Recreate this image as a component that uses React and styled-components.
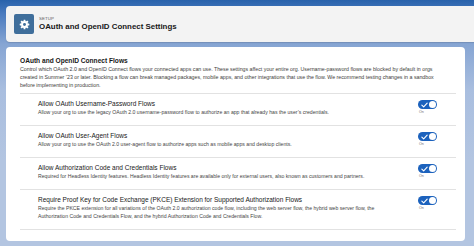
import React from "react"
import styled, { createGlobalStyle } from "styled-components"

const GlobalStyle = createGlobalStyle`
  html, body {
    margin: 0;
    padding: 0;
  }
  body {
    width: 474px;
    height: 246px;
    overflow: hidden;
    font-family: "Liberation Sans", Arial, sans-serif;
    color: #181818;
    background: linear-gradient(
      180deg,
      #2862ab 0px,
      #4a7bbf 14px,
      #86a5d3 44px,
      #a9bedf 90px,
      #b3c5e1 160px
    );
  }
`

const Page = styled.div`
  display: flex;
  flex-direction: column;
  gap: 5px;
  padding: 6px 0 0 6px;
`

const PageHeader = styled.div`
  display: flex;
  align-items: center;
  gap: 4px;
  height: 36px;
  box-sizing: border-box;
  padding: 0 0 0 8px;
  margin-right: -4px;
  background: #f3f3f3;
  border-radius: 4px 0 0 4px;
  box-shadow: 0 1px 1px rgba(0, 0, 0, 0.12);
`

const SetupIcon = styled.div`
  display: flex;
  align-items: center;
  justify-content: center;
  width: 20px;
  height: 20px;
  border-radius: 2px;
  background: #3f6e9b;
`

const HeaderText = styled.div`
  display: flex;
  flex-direction: column;
  padding-left: 1px;
`

const Eyebrow = styled.div`
  font-size: 4.4px;
  line-height: 6px;
  color: #5c5c5c;
  text-transform: uppercase;
  letter-spacing: 0.1px;
`

const PageTitle = styled.h1`
  margin: 0;
  font-size: 7.9px;
  line-height: 10px;
  font-weight: 700;
  color: #181818;
`

const Card = styled.div`
  width: 459px;
  box-sizing: border-box;
  padding: 10px 9px 11px 14px;
  background: #ffffff;
  border-radius: 4px;
`

const SectionTitle = styled.h2`
  margin: 0;
  font-size: 6.6px;
  line-height: 8px;
  font-weight: 700;
  color: #181818;
`

const SectionText = styled.p`
  margin: 0 0 4px;
  font-size: 5.25px;
  line-height: 8px;
  color: #3e3e3c;
  white-space: nowrap;
`

const Setting = styled.div`
  display: flex;
  align-items: flex-start;
  justify-content: space-between;
  padding: 6px 19px 9px 18px;
  border-top: 1px solid #e2e2e2;

  &:last-child {
    border-bottom: 1px solid #e2e2e2;
  }
`

const SettingText = styled.div`
  display: flex;
  flex-direction: column;
`

const SettingTitle = styled.div`
  font-size: 6.5px;
  line-height: 8px;
  color: #181818;
`

const SettingHelp = styled.div`
  font-size: 5.15px;
  line-height: 8px;
  color: #444444;
  white-space: nowrap;
`

const ToggleWrap = styled.div`
  display: flex;
  flex-direction: column;
  align-items: flex-start;
  padding-top: 0px;
`

const Toggle = styled.div`
  position: relative;
  display: flex;
  align-items: center;
  width: 19px;
  height: 9px;
  border-radius: 5px;
  background: ${(p) => (p.$on ? "#1c62bd" : "#c9c9c9")};
`

const Knob = styled.span`
  position: absolute;
  top: 1px;
  right: 1px;
  width: 7px;
  height: 7px;
  border-radius: 50%;
  background: #ffffff;
`

const ToggleLabel = styled.span`
  margin-top: 1px;
  padding-left: 1px;
  font-size: 3.6px;
  line-height: 5px;
  color: #706e6b;
`

const Gear = () => {
  const teeth = [0, 45, 90, 135, 180, 225, 270, 315]
  return (
    <svg width="11" height="11" viewBox="0 0 24 24">
      {teeth.map((a) => (
        <rect
          key={a}
          x="10"
          y="1.5"
          width="4"
          height="5"
          rx="0.8"
          fill="#fff"
          transform={`rotate(${a} 12 12)`}
        />
      ))}
      <circle cx="12" cy="12" r="7.4" fill="#fff" />
      <circle cx="12" cy="12" r="3.2" fill="#3f6e9b" />
    </svg>
  )
}

const Switch = ({ on = true }) => (
  <ToggleWrap>
    <Toggle $on={on}>
      <svg width="7" height="6" viewBox="0 0 10 8" style={{ marginLeft: 3 }}>
        <path
          d="M1.2 4.2 L3.8 6.6 L8.8 1.4"
          fill="none"
          stroke="#fff"
          strokeWidth="1.6"
          strokeLinecap="round"
          strokeLinejoin="round"
        />
      </svg>
      <Knob />
    </Toggle>
    <ToggleLabel>{on ? "On" : "Off"}</ToggleLabel>
  </ToggleWrap>
)

const settings = [
  {
    title: "Allow OAuth Username-Password Flows",
    help: [
      "Allow your org to use the legacy OAuth 2.0 username-password flow to authorize an app that already has the user\u2019s credentials.",
    ],
  },
  {
    title: "Allow OAuth User-Agent Flows",
    help: [
      "Allow your org to use the OAuth 2.0 user-agent flow to authorize apps such as mobile apps and desktop clients.",
    ],
  },
  {
    title: "Allow Authorization Code and Credentials Flows",
    help: [
      "Required for Headless Identity features. Headless Identity features are available only for external users, also known as customers and partners.",
    ],
  },
  {
    title:
      "Require Proof Key for Code Exchange (PKCE) Extension for Supported Authorization Flows",
    help: [
      "Require the PKCE extension for all variations of the OAuth 2.0 authorization code flow, including the web server flow, the hybrid web server flow, the",
      "Authorization Code and Credentials Flow, and the hybrid Authorization Code and Credentials Flow.",
    ],
  },
]

const App = () => {
  return (
    <Page>
      <GlobalStyle />
      <PageHeader>
        <SetupIcon>
          <Gear />
        </SetupIcon>
        <HeaderText>
          <Eyebrow>Setup</Eyebrow>
          <PageTitle>OAuth and OpenID Connect Settings</PageTitle>
        </HeaderText>
      </PageHeader>
      <Card>
        <SectionTitle>OAuth and OpenID Connect Flows</SectionTitle>
        <SectionText>
          Control which OAuth 2.0 and OpenID Connect flows your connected apps can use. These settings affect your entire org. Username-password flows are blocked by default in orgs
          <br />
          created in Summer &rsquo;23 or later. Blocking a flow can break managed packages, mobile apps, and other integrations that use the flow. We recommend testing changes in a sandbox
          <br />
          before implementing in production.
        </SectionText>
        <div>
          {settings.map((s) => (
            <Setting key={s.title}>
              <SettingText>
                <SettingTitle>{s.title}</SettingTitle>
                {s.help.map((line) => (
                  <SettingHelp key={line}>{line}</SettingHelp>
                ))}
              </SettingText>
              <Switch on />
            </Setting>
          ))}
        </div>
      </Card>
    </Page>
  )
}

export default App
